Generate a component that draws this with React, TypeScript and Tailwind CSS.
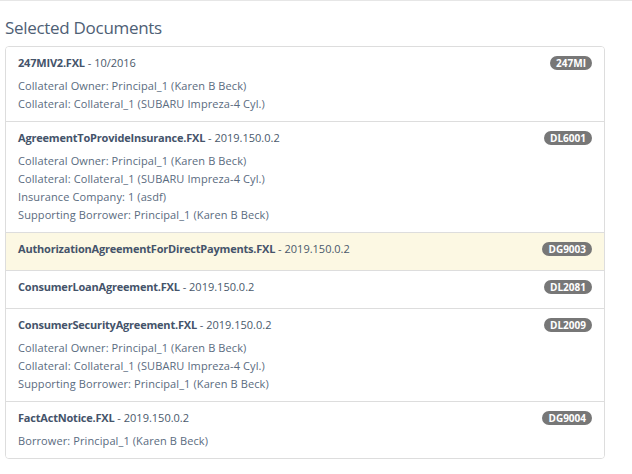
const DOCS = [
  {
    name: "247MIV2.FXL",
    version: "10/2016",
    code: "247MI",
    lines: ["Collateral Owner: Principal_1 (Karen B Beck)", "Collateral: Collateral_1 (SUBARU Impreza-4 Cyl.)"],
  },
  {
    name: "AgreementToProvideInsurance.FXL",
    version: "2019.150.0.2",
    code: "DL6001",
    lines: [
      "Collateral Owner: Principal_1 (Karen B Beck)",
      "Collateral: Collateral_1 (SUBARU Impreza-4 Cyl.)",
      "Insurance Company: 1 (asdf)",
      "Supporting Borrower: Principal_1 (Karen B Beck)",
    ],
  },
  {
    name: "AuthorizationAgreementForDirectPayments.FXL",
    version: "2019.150.0.2",
    code: "DG9003",
    lines: [],
    highlight: true,
  },
  { name: "ConsumerLoanAgreement.FXL", version: "2019.150.0.2", code: "DL2081", lines: [] },
  {
    name: "ConsumerSecurityAgreement.FXL",
    version: "2019.150.0.2",
    code: "DL2009",
    lines: [
      "Collateral Owner: Principal_1 (Karen B Beck)",
      "Collateral: Collateral_1 (SUBARU Impreza-4 Cyl.)",
      "Supporting Borrower: Principal_1 (Karen B Beck)",
    ],
  },
  {
    name: "FactActNotice.FXL",
    version: "2019.150.0.2",
    code: "DG9004",
    lines: ["Borrower: Principal_1 (Karen B Beck)"],
  },
];

export default function App() {
  return (
    <div className="w-[632px] h-[474px] bg-white overflow-hidden font-['Open_Sans',sans-serif]">
      <div className="h-px bg-[#e6e6e6]" />
      <div className="px-[5px] pr-[27px]">
        <h2 className="text-[17px] leading-[22px] tracking-[-0.3px] text-[#4e6075] mt-[16px] mb-[7px]">
          Selected Documents
        </h2>

        <div className="border border-[#dddddd] rounded-[4px] overflow-hidden">
          {DOCS.map((doc, i) => (
            <div
              key={doc.name}
              className={`px-[12px] pt-[7px] ${doc.lines.length ? "pb-[8px]" : "pb-[7px]"} ${
                i > 0 ? "border-t border-[#dddddd]" : ""
              } ${doc.highlight ? "bg-[#fcf8e3]" : "bg-white"}`}
            >
              <div className="flex items-center justify-between mb-[6px]">
                <div className="text-[11px] leading-[17px] text-[#4a596b]">
                  <span className="font-bold tracking-[-0.2px] text-[#44536a]">{doc.name}</span> - {doc.version}
                </div>
                <span className="bg-[#777777] text-white text-[10px] font-bold leading-[14px] px-[6px] rounded-full">
                  {doc.code}
                </span>
              </div>
              {doc.lines.map((line) => (
                <div key={line} className="text-[11px] leading-[18px] tracking-[0.1px] text-[#5a6b80]">
                  {line}
                </div>
              ))}
            </div>
          ))}
        </div>
      </div>
    </div>
  );
}
